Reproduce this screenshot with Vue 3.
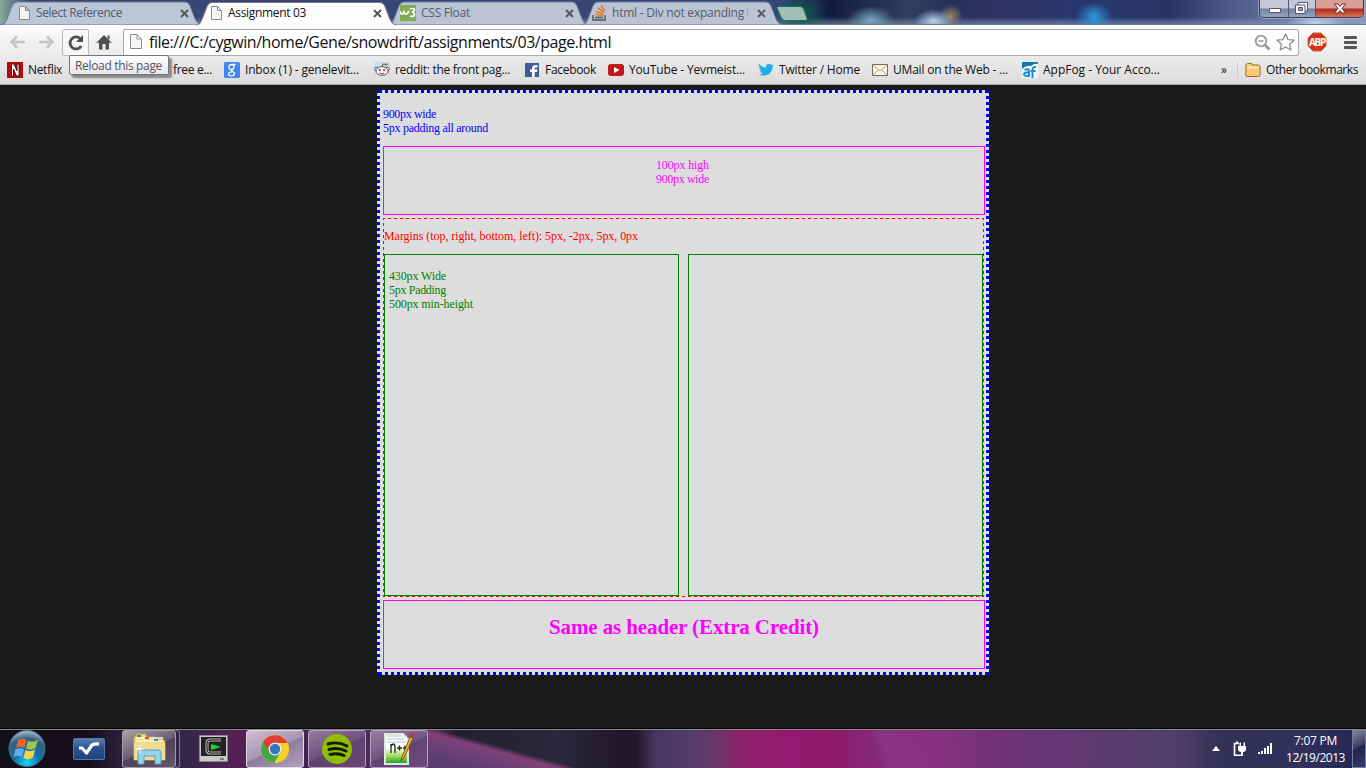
<script setup>
// Spreads the letters of a label so that it takes the given width in pixels
const vFit = {
  mounted(el, { value }) {
    const natural = el.getBoundingClientRect().width
    el.style.letterSpacing = (value - natural) / el.textContent.length + 'px'
  }
}

const tabs = [
  { icon: 'page', text: 'Select Reference', fit: 86 },
  { icon: 'page', text: 'Assignment 03', fit: 78, active: true },
  { icon: 'w3', text: 'CSS Float', fit: 49 },
  { icon: 'so', text: 'html - Div not expanding', fit: 132, more: true }
]

const bookmarks = [
  { icon: 'netflix', text: 'Netflix', fit: 34, width: 69 },
  { icon: 'hidden', text: 'free e...', fit: 39, width: 148 },
  { icon: 'google', text: 'Inbox (1) - genelevit...', fit: 114, width: 150 },
  { icon: 'reddit', text: 'reddit: the front pag...', fit: 115, width: 150 },
  { icon: 'facebook', text: 'Facebook', fit: 51, width: 84 },
  { icon: 'youtube', text: 'YouTube - Yevmeist...', fit: 116, width: 150 },
  { icon: 'twitter', text: 'Twitter / Home', fit: 81, width: 114 },
  { icon: 'mail', text: 'UMail on the Web - ...', fit: 115, width: 150 },
  { icon: 'appfog', text: 'AppFog - Your Acco...', fit: 117, width: 199 }
]
</script>

<template>
  <div class="screen">
    <div class="frame">
      <div class="tabs">
        <div v-for="t in tabs" :key="t.text" class="tab" :class="{ active: t.active }">
          <svg class="shape" width="200" height="24" viewBox="0 0 200 24">
            <path d="M0 23.5C4 23 4.500 21.500 6 18L11 5Q12.500 1 16 1H184Q187.500 1 189 5L194 18Q196 23 200 23.500" />
          </svg>
          <svg v-if="t.icon === 'page'" class="ico" width="16" height="16" viewBox="0 0 16 16"><path d="M3.500 1.500H9.500L13.500 5.500V14.500H3.500ZM9.500 1.500V5.500H13.500" fill="#f5f5f5" stroke="#8c8c8c" /></svg>
          <svg v-else-if="t.icon === 'w3'" class="ico" width="16" height="16"><path d="M0 0H16V16H0Z" fill="#83aa50" /><path d="M0 6C1 10 3 10 4 7C5 10 7 10 9 6M10 4C16 2 15 7 12 7C16 8 15 13 10 11" fill="none" stroke="#fff" stroke-width="1.700" /></svg>
          <svg v-else class="ico" width="16" height="16"><path d="M1 10V15H13V10M3 12.500H11" fill="none" stroke="#6b6c70" stroke-width="1.800" /><path d="M3.500 9.500L11 10.500M4 6.500L11.500 9M6 3L12 7.500M9 .5L13 6" stroke="#df7b29" stroke-width="1.600" /></svg>
          <span v-fit="t.fit" class="label">{{ t.text }}</span><i v-if="t.more" class="more"></i>
          <svg class="close" width="9" height="9"><path d="M1 1L8 8M8 1L1 8" stroke="#555" stroke-width="1.900" /></svg>
        </div>
        <svg class="newtab" width="34" height="18"><path d="M3 1.500H25Q28 1.500 29 5L32 13Q33 15.500 30 15.500H10Q7 15.500 6 12L2 3Q1.500 1.500 3 1.500Z" fill="#a9c4bb" stroke="#267052" /></svg>
      </div>
      <div class="controls">
        <span class="min"><svg width="28" height="19"><path d="M9.500 9.500H20.500V13.500H9.500Z" fill="#fff" stroke="#52546b" /></svg></span>
        <span class="max"><svg width="26" height="19"><path d="M9 3.500H18.500V12H16V14.500H6.500V6H9Z" fill="#fff" stroke="#52546b" /><path d="M9.500 8.500H13.500V11.500H9.500Z" fill="#9a9eb0" stroke="#52546b" /><path d="M9 6H16V12" fill="none" stroke="#52546b" /></svg></span>
        <span class="shut"><svg width="47" height="19"><path d="M18.500 4H22L24 6.500L26 4H29.500L26 8.500L29.500 13H26L24 10.500L22 13H18.500L22 8.500Z" fill="#fff" stroke="#6a3038" /></svg></span>
      </div>
    </div>

    <div class="toolbar">
      <svg class="arrow" width="17" height="14"><path d="M16 7H3M8 1.500L2.500 7L8 12.500" fill="none" stroke="#c3c3c3" stroke-width="2.500" /></svg>
      <svg class="arrow fwd" width="17" height="14"><path d="M1 7H14M9 1.500L14.500 7L9 12.500" fill="none" stroke="#c3c3c3" stroke-width="2.500" /></svg>
      <div class="reload"><svg width="18" height="18"><path d="M14.200 12A6 6 0 1 1 13.300 4.700" fill="none" stroke="#4d4d4d" stroke-width="2.800" /><path d="M16 1V8H9Z" fill="#4d4d4d" /></svg></div>
      <svg class="home" width="16" height="16"><path d="M8 1L15.500 8.500L14.500 9.500L13 8V15.500H9.500V10H6.500V15.500H3V8L1.500 9.500L.5 8.500ZM11.500 1.500H13.500V6L11.500 4Z" fill="#4f4f4f" /></svg>
      <div class="omnibox">
        <svg class="doc" width="16" height="16"><path d="M2.500 .5H9L13.500 5V14.500H2.500ZM9 .5V5H13.500" fill="#f6f6f6" stroke="#8c8c8c" /></svg>
        <span v-fit="462" class="url">file:///C:/cygwin/home/Gene/snowdrift/assignments/03/page.html</span>
        <svg class="lens" width="17" height="17"><circle cx="7" cy="7" r="5.300" fill="none" stroke="#999" stroke-width="1.800" /><path d="M4.500 7H9.500" stroke="#999" stroke-width="1.600" /><path d="M11 11L15.500 15.500" stroke="#999" stroke-width="2.800" /></svg>
        <svg class="star" width="19" height="18"><path d="M9.500 1L12 6.600L18 7.200L13.500 11.200L14.900 17L9.500 14L4.100 17L5.500 11.200L1 7.200L7 6.600Z" fill="#fff" stroke="#8c8c8c" stroke-width="1.300" stroke-linejoin="round" /></svg>
      </div>
      <div class="abp"><svg width="20" height="20"><path d="M6 1H14L19 6V14L14 19H6L1 14V6Z" fill="#cf3418" stroke="#d75d45" /></svg><b v-fit="16">ABP</b></div>
      <div class="burger"><i></i><i></i><i></i></div>
    </div>

    <div class="bookmarks">
      <div v-for="b in bookmarks" :key="b.text" class="mark" :class="b.icon" :style="{ width: b.width + 'px' }">
        <svg v-if="b.icon !== 'hidden'" width="16" height="16" viewBox="0 0 16 16">
          <template v-if="b.icon === 'netflix'"><path d="M0 0H16V16H0Z" fill="#b9090b" /><path d="M4.500 14V2H7L10 9V2H12V14H9.500L6.500 7V14Z" fill="#fff" stroke="#300" stroke-width=".8" /></template>
          <template v-else-if="b.icon === 'google'"><rect width="16" height="16" rx="1.500" fill="#4285f4" /><path d="M11.500 2.500H8C4 2.500 4 7.500 7.500 7.500C11 7 10.500 2.500 8 2.500M8 7.500C6.500 9 10.500 9.500 10.500 11.500C10.500 14.500 4.500 14.500 4.500 12C4.500 10 8 9.500 9 9.800" fill="none" stroke="#fff" stroke-width="1.300" /></template>
          <template v-else-if="b.icon === 'reddit'"><path d="M0 0H16V13H0Z" fill="#c8dff2" /><circle cx="2.500" cy="7" r="1.800" fill="#fff" stroke="#555" /><circle cx="13.500" cy="7" r="1.800" fill="#fff" stroke="#555" /><ellipse cx="8" cy="9" rx="6" ry="4.300" fill="#fff" stroke="#555" /><path d="M8 5L9 2L12 2.500" fill="none" stroke="#555" /><circle cx="12.500" cy="2.500" r="1.200" fill="#777" /><circle cx="5.800" cy="8" r="1.200" fill="#f33" /><circle cx="10.200" cy="8" r="1.200" fill="#f33" /><path d="M5.500 11Q8 12.500 10.500 11" fill="none" stroke="#555" /></template>
          <template v-else-if="b.icon === 'facebook'"><path d="M1 1H15V15H1Z" fill="#3f5c9a" /><path d="M8 15V10H6V7.500H8V6C8 3.500 10 2.500 13.500 3V5.500C11 5.300 10.700 5.500 10.700 7.500H13.500L13 10H10.700V15Z" fill="#fff" /></template>
          <template v-else-if="b.icon === 'youtube'"><rect y="2" width="16" height="12" rx="3" fill="#c01b17" /><path d="M6 5L11.500 8L6 11Z" fill="#fff" /></template>
          <template v-else-if="b.icon === 'twitter'"><path d="M1 2Q4 5.500 8 5.500C7.500 1.500 11.500 1 13 3L15.500 2.500L14.500 5C14.500 12 7 15.500 .5 12.500Q3.500 12.500 5 11.500Q2.500 11 2 9L3.500 8.800Q1 7.500 1 5.500L2.500 6Q0 4.500 1 2Z" fill="#1eaeea" /></template>
          <template v-else-if="b.icon === 'mail'"><path d="M.5 2.500H15.500V13.500H.5Z" fill="#fff9e8" stroke="#776d59" /><path d="M1 3L8 9L15 3M1 13L6 8M15 13L10 8" fill="none" stroke="#aa9d80" /></template>
          <template v-else-if="b.icon === 'appfog'"><path d="M0 0H16V7H0Z" fill="#1c73a5" /><path d="M0 7Q4 3 9 4Q12 1 16 2V16H0Z" fill="#eef7fc" /><path d="M2.500 8Q7 6 7 9V15M7 10.500Q2 10 2 12.500Q3 15.500 7 13M10.500 16V8Q10.500 4.500 14 5M8.500 9H13.500" fill="none" stroke="#168bc7" stroke-width="1.900" /></template>
        </svg>
        <span v-fit="b.fit">{{ b.text }}</span>
      </div>
      <span class="chev">»</span>
      <i class="rule"></i>
      <svg class="folder" width="16" height="16"><path d="M1 5V3Q1 1.500 2.500 1.500H6Q7 1.500 7.500 3H13Q15 3 15 5V13Q15 14.500 13.500 14.500H2Q.8 14.500 .8 13Z" fill="#f7cb7c" stroke="#a36b25" /><path d="M2 5.500H14" stroke="#ffe6ae" stroke-width="2" /></svg>
      <span v-fit="92">Other bookmarks</span>
    </div>
    <div class="tip"><span v-fit="87">Reload this page</span></div>

    <div class="page">
      <div class="wrap">
        <p class="intro"><span v-fit="53">900px wide</span><br><span v-fit="105">5px padding all around</span></p>
        <div class="head"><span v-fit="53">100px high</span><br><span v-fit="53">900px wide</span></div>
        <div class="main">
          <p><span v-fit="254">Margins (top, right, bottom, left): 5px, -2px, 5px, 0px</span></p>
          <div class="cols">
            <div class="col"><span v-fit="57">430px Wide</span><br><span v-fit="57">5px Padding</span><br><span v-fit="84">500px min-height</span></div>
            <div class="col"></div>
          </div>
        </div>
        <div class="foot"><span v-fit="270">Same as header (Extra Credit)</span></div>
      </div>
    </div>

    <div class="taskbar">
      <svg class="orb" width="40" height="40" viewBox="0 0 40 40">
        <defs><radialGradient id="orb" cx=".5" cy=".9" r=".9"><stop stop-color="#16d5f5" /><stop offset=".4" stop-color="#126fac" /><stop offset=".75" stop-color="#355f7c" /><stop offset="1" stop-color="#b1c6d1" /></radialGradient></defs>
        <circle cx="20" cy="19.500" r="18" fill="url(#orb)" stroke="#4a7488" />
        <path d="M11 11Q15 8 19.500 11L17.500 19Q13 16.500 9 19Z" fill="#ed6332" /><path d="M21 12Q26 14 31 11L28.500 19Q24 22 19 19.500Z" fill="#9bc850" /><path d="M8.500 20.500Q13 18 17 20.500L15 28Q11 25.500 6.500 28Z" fill="#62aeea" /><path d="M18.500 21Q23 23.500 28 20.500L26 28.500Q21 31.500 16.500 29Z" fill="#fdd34b" />
      </svg>
      <svg class="wave" width="32" height="22"><defs><linearGradient id="wv" x2="0" y2="1"><stop stop-color="#5680ba" /><stop offset=".5" stop-color="#274f8d" /><stop offset="1" stop-color="#214478" /></linearGradient></defs><rect x=".5" y=".5" width="31" height="21" rx="1.500" fill="url(#wv)" stroke="#5277a5" /><path d="M6 10L9 10L13.500 15L19 7Q20.500 5.500 26 6" fill="none" stroke="#fff" stroke-width="3.200" stroke-linejoin="round" /></svg>
      <div class="task explorer">
        <svg width="34" height="32"><path d="M2 5L5 1H13L15 4H23L24 6H31L33 9V27H2Z" fill="#f6d98a" stroke="#c9a253" /><path d="M4 5H31M4 8H31" stroke="#fff5ca" stroke-width="1.500" /><path d="M5 2H9V4H5Z" fill="#1cab31" /><path d="M13 4H17V6H13Z" fill="#df4b31" /><path d="M22 6H26V8H22Z" fill="#289bd7" /><path d="M2 10H33V27H2Z" fill="#f3da91" /><path d="M6 31V20Q6 17 9 17H26Q29 17 29 20V31H23V23H12V31Z" fill="#94d5ec" stroke="#4fa3c8" /><path d="M8 12V20M4 16H12" stroke="#fff" /></svg>
      </div>
      <i class="stack"></i>
      <svg class="cyg" width="29" height="27"><path d="M.5 .5H28.500V26.500H.5Z" fill="#c9c9c9" stroke="#888" /><path d="M2 2H27V21H2Z" fill="#222" /><path d="M22 5H11Q8 5 8 8V15Q8 18 11 18H22" fill="none" stroke="#b7b7b7" stroke-width="3" /><path d="M22 5H11Q8 5 8 8V15Q8 18 11 18H22" fill="none" stroke="#111" /><path d="M12 9L22 12L12 15Z" fill="#22d32c" /><path d="M21 24H25" stroke="#333" /></svg>
      <div class="task chrome">
        <svg width="30" height="30"><circle cx="15" cy="15" r="14" fill="#f7cf28" /><path d="M2.900 8A14 14 0 0 1 27.500 9H15L9 18.500Z" fill="#df3e30" /><path d="M2.900 8A14 14 0 0 0 14 29L20.500 18.500L9.500 18.500Z" fill="#40a849" /><circle cx="15" cy="15" r="6.500" fill="#f1f1f1" /><circle cx="15" cy="15" r="5.200" fill="#3278bd" /></svg>
      </div>
      <div class="task">
        <svg width="30" height="30"><circle cx="15" cy="15" r="15" fill="#91bd00" /><path d="M6 10Q16 7 25 12M7 15.500Q16 13 24 17M8 20.500Q16 18.500 22 21.500" fill="none" stroke="#101a00" stroke-width="2.900" stroke-linecap="round" /></svg>
      </div>
      <div class="task npp">
        <svg width="31" height="33"><defs><linearGradient id="np" x2="0" y2="1"><stop offset=".45" stop-color="#fff" /><stop offset=".7" stop-color="#aee26b" /><stop offset="1" stop-color="#159b24" /></linearGradient></defs><path d="M1 2H19L24 7V32H1Z" fill="url(#np)" stroke="#e2e8de" stroke-width="2" /><path d="M3 4H18M3 7H20M3 10H22" stroke="#a7c3dd" /><path d="M7 21V12M7 14Q10 10 11 14V21M13 16H18M15.500 13.500V18.500M19 16H23M21 13.500V18.500" fill="none" stroke="#222" stroke-width="1.300" /><path d="M26 5L18 25L17 29L20 26L29 6Z" fill="#efaf2d" stroke="#855710" /><path d="M26 5L27.500 1L30.500 2L29 6Z" fill="#b63647" /></svg>
      </div>
      <div class="tray">
        <svg class="up" width="8" height="5"><path d="M0 5L4 0L8 5Z" fill="#fff" /></svg>
        <svg class="plug" width="14" height="16"><path d="M8 14.200H1.500V2.500H6M3 1.200H5" fill="none" stroke="#fff" stroke-width="1.600" /><path d="M5 5H13V8Q13 11 10 11V15H8V11Q5 10.500 5 8ZM6.500 1.500H8V5H6.500ZM10.500 1.500H12V5H10.500Z" fill="#fff" /></svg>
        <svg class="wifi" width="15" height="12"><path d="M0 9H2V11H0ZM3 8H5V11H3ZM6 5H8V11H6ZM9 3H11V11H9ZM12 0H14V11H12Z" fill="#fff" /></svg>
        <div class="clock"><span v-fit="43">7:07 PM</span><span v-fit="59">12/19/2013</span></div>
        <i class="desk"></i>
      </div>
    </div>
  </div>
</template>

<style>
html, body { margin: 0; overflow: hidden; }
</style>

<style scoped>
.screen { position: relative; width: 1366px; height: 768px; overflow: hidden; background: #1a1a1a; font: 12px "Open Sans", "Noto Sans", sans-serif; color: #111; display: flex; flex-direction: column; }
.screen svg { display: block; flex: none; }
.frame { height: 25px; display: flex; justify-content: space-between; box-sizing: border-box; padding: 0 2px 0 2px; border-bottom: 1px solid #66799f;
  background: radial-gradient(ellipse 24px 14px at 871px 20px, #7aa6bf, transparent), radial-gradient(ellipse 20px 12px at 934px 21px, #b8d2f0, transparent), radial-gradient(ellipse 12px 12px at 951px 16px, #93815f, transparent), radial-gradient(ellipse 18px 15px at 1094px 17px, #2f9ae0, transparent), radial-gradient(ellipse 30px 10px at 1316px 23px, #b9d4ed, transparent), radial-gradient(ellipse 30px 22px at 798px 15px, #0b5d48, transparent), linear-gradient(transparent 17px, #8fa8d077 23px), linear-gradient(90deg, #85a897 0, #374674 30px, #38467a 780px, #101d3d 830px, #303e5d 910px, #26315c 950px, #303263 1000px, #27386f 1080px, #293465 1170px, #505d8b 1235px, #8994b5); }
.tabs { display: flex; }
.tab { width: 196px; height: 24px; position: relative; display: flex; align-items: center; box-sizing: border-box; padding: 1px 0 0 14px; color: #545b67; flex: none; }
.tab .shape { position: absolute; left: 0; top: 1px; fill: #bac4d5; stroke: #727b91; }
.tab:first-child { width: 193px; }
.tab:first-child .shape { left: -1px; fill: #b9c7d8; }
.tab:nth-child(2) { margin-left: 1px; }
.tab:nth-child(3) { margin-left: -4px; padding-left: 12px; }
.tab:nth-child(4) { margin-left: -2px; padding-left: 10px; }
.tab.active { z-index: 2; color: #111; padding-left: 12px; height: 25px; }
.tab.active .shape { fill: #fdfdfd; height: 25px; }
.ico { position: relative; margin-right: 4px; }
.tab:nth-child(3) .ico { margin-right: 5px; }
.tab .label { position: relative; white-space: nowrap; line-height: 16px; }
.tab .close { position: absolute; right: 10px; top: 9px; }
.tab:first-child .close { right: 6px; }
.tab:nth-child(4) .close { right: 12px; }
.more { position: relative; width: 1px; height: 9px; margin-left: 3px; background: #a1a9b6; }
.newtab { margin: 5px 0 0 -3px; }
.newtab path { opacity: .95; }
.controls { height: 18px; display: flex; box-sizing: border-box; border: 1px solid #343a58; border-top: 0; border-radius: 0 0 5px 5px; overflow: hidden; box-shadow: 0 0 0 1px #b8c3db99; }
.controls svg { margin-top: -1px; }
.shut svg { margin-top: 0; }
.min, .max { background: linear-gradient(#c3c7d7 8px, #737f9f 9px, #98a5bf); border-right: 1px solid #50587a; }
.shut { background: linear-gradient(#d8a096 8px, #b32818 9px, #d27856); }
.toolbar { height: 31px; display: flex; align-items: center; background: linear-gradient(#fff, #f2f2f2 15px, #ebebeb); box-sizing: border-box; padding: 3px 8px 0; }
.arrow { margin-left: 1px; flex: none; }
.arrow.fwd { margin-left: 12px; }
.reload { width: 27px; height: 27px; flex: none; box-sizing: border-box; border: 1px solid #b9b9b9; border-radius: 2px; background: #f7f7f7; padding: 4px 0 0 4px; margin: 0 8px 0 7px; }
.home { margin-left: -1px; }
.omnibox { width: 1176px; flex: none; height: 27px; margin-left: 11px; box-sizing: border-box; border: 1px solid #aaa; border-radius: 2px; background: #fff; display: flex; align-items: center; font-size: 16px; }
.doc { margin: 0 5px 0 4px; }
.url { white-space: nowrap; line-height: 22px; }
.lens { margin-left: auto; margin-right: 5px; }
.star { margin-right: 3px; }
.abp { position: relative; width: 20px; height: 20px; margin-left: 8px; flex: none; }
.abp b { position: absolute; left: 2px; top: 4px; color: #fff; font-size: 10px; line-height: 12px; white-space: nowrap; }
.burger { width: 13px; margin-left: 17px; display: grid; gap: 2px; flex: none; }
.burger i { height: 3px; background: #555; border-radius: 1px; }
.bookmarks { height: 29px; flex: none; box-sizing: border-box; border-bottom: 1px solid #aaa; background: linear-gradient(#ebebeb, #dcdcdc); display: flex; align-items: center; padding-left: 7px; white-space: nowrap; line-height: 16px; }
.mark { flex: none; display: flex; align-items: center; gap: 5px; box-sizing: border-box; }
.mark.hidden { padding-left: 97px; }
.chev { width: 13px; margin-left: 0; }
.rule { width: 1px; height: 16px; background: #c7cdd2; margin: 0 7px 0 3px; }
.folder { margin-right: 5px; }
.tip { position: absolute; z-index: 4; left: 69px; top: 55px; width: 100px; height: 20px; box-sizing: border-box; border: 1px solid #777; border-radius: 2px; background: linear-gradient(#fff, #e5e6f0); box-shadow: 3px 3px 2px #0006; padding-left: 5px; line-height: 19px; color: #555; white-space: nowrap; }
.page { height: 643px; flex: none; padding: 5px 0 0 377px; box-sizing: border-box; font: 12px/14px "Liberation Serif", serif; white-space: nowrap; }
.wrap { width: 612px; height: 585px; box-sizing: border-box; padding: 17px 4px 0 6px; color: #00f;
  background: linear-gradient(#00f, #00f) 0 0 / 3px 3px no-repeat, linear-gradient(#00f, #00f) 100% 0 / 3px 3px no-repeat, linear-gradient(#00f, #00f) 0 100% / 3px 3px no-repeat, linear-gradient(#00f, #00f) 100% 100% / 3px 3px no-repeat,
  linear-gradient(90deg, #00f 3px, #ddd 3px) 2px 0 / 6px 3px repeat-x, linear-gradient(90deg, #00f 3px, #ddd 3px) 2px 100% / 6px 3px repeat-x, linear-gradient(#00f 3px, #ddd 3px) 0 0 / 3px 6px repeat-y, linear-gradient(#00f 3px, #ddd 3px) 100% 0 / 3px 6px repeat-y, #ddd; }
.intro { margin: 0; height: 39px; }
.head { height: 69px; box-sizing: border-box; border: 1px solid #f0f; color: #f0f; text-align: center; padding-top: 11px; padding-right: 3px; }
.main { width: 601px; height: 379px; margin-top: 3px; box-sizing: border-box; padding: 11px 1px 1px; color: #f00;
  background: linear-gradient(90deg, #f00 3px, transparent 3px) 5px 0 / 6px 1px repeat-x, linear-gradient(90deg, #f00 3px, transparent 3px) 5px 100% / 6px 1px repeat-x, linear-gradient(#f00 3px, transparent 3px) 0 5px / 1px 6px repeat-y, linear-gradient(#f00 3px, transparent 3px) 100% 5px / 1px 6px repeat-y; }
.main p { margin: 0; height: 25px; }
.cols { display: flex; gap: 9px; }
.col { width: 295px; height: 342px; box-sizing: border-box; border: 1px solid #008000; padding: 14px 4px; color: #008000; }
.foot { height: 69px; margin-top: 3px; box-sizing: border-box; border: 1px solid #f0f; color: #f0f; text-align: center; font-weight: bold; font-size: 21px; line-height: 24px; padding-top: 14px; }
.taskbar { height: 40px; flex: none; display: flex; align-items: center; box-sizing: border-box; border-top: 1px solid #050505; box-shadow: inset 0 1px #8d8492; padding-left: 7px;
  background: linear-gradient(to top right, #5c3d70 15%, #71407a 35%, #7e4276 46%, transparent 53%) 428px 0 / 146px 40px no-repeat, linear-gradient(70deg, transparent 40%, #8a3484 48%, #83307d00) 820px 0 / 140px 40px no-repeat, linear-gradient(90deg, #130f18 0, #15101b 90px, #2d2340 125px, #302747 180px, #552056 235px, #402650 310px, #593067 425px, #222030 455px, #2c273c 560px, #1f182c 620px, #1f182c 636px, #47355f 655px, #553c6a 690px, #693766 716px, #8b2169 740px, #951970 790px, #8e1a6c 835px, #842a7c 880px, #83307d 950px, #6e3277 1010px, #593b70 1110px, #514069 1175px, #343155 1220px, #32315a 1300px, #232454); }
.orb { width: 40px; height: 40px; }
.wave { margin-left: 26px; }
.task { width: 58px; height: 38px; margin-left: 4px; flex: none; box-sizing: border-box; border: 1px solid #b6a0bb; border-radius: 3px; background: linear-gradient(155deg, #b79bb8bb, #806490aa 50%, #684b7bbb 51%, #7d5c8d99); display: flex; align-items: center; justify-content: center; }
.task.explorer { width: 54px; margin-left: 17px; border-color: #a49ca8; background: linear-gradient(155deg, #aaa1ad, #655d72 50%, #4c4158 51%, #66586f); }
.stack { width: 4px; height: 38px; box-sizing: border-box; border: 1px solid #81758a; border-left: 0; border-radius: 0 3px 3px 0; }
.cyg { margin: 0 0 0 19px; }
.task.chrome { margin-left: 18px; background: linear-gradient(155deg, #d1bdd2, #a796b2 50%, #8e7c9e 51%, #b2a1ba); border-color: #e5dae8; }
.tray { margin-left: auto; display: flex; align-items: center; color: #fff; height: 100%; }
.up { margin-right: 13px; }
.plug { margin-right: 11px; }
.wifi { margin-right: 12px; }
.clock { width: 61px; display: flex; flex-direction: column; align-items: center; line-height: 17px; white-space: nowrap; }
.desk { width: 14px; height: 38px; margin-left: 6px; box-sizing: border-box; border: 1px solid #757ba0; background: linear-gradient(150deg, #8887a0, #39395b 45%, #202349 46%, #383b70); }
</style>
